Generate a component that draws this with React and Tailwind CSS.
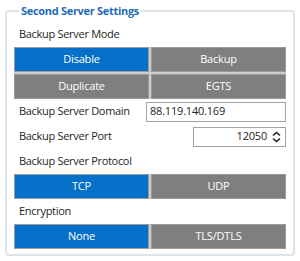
const font = { fontFamily: '"Open Sans", "Noto Sans", sans-serif' };

const Seg = ({ label, active }) => (
  <div
    className={`h-[25px] flex items-center justify-center border border-[#9a9a9a] text-[11px] tracking-[-0.2px] text-white ${
      active ? "bg-[#0770c8]" : "bg-[#7f7f7f]"
    }`}
  >
    {label}
  </div>
);

const Label = ({ children }) => (
  <div className="h-[25px] flex items-center pl-[5px] text-[11px] tracking-[-0.3px] text-[#1e1e1e]">{children}</div>
);

const Spinner = () => (
  <svg width="9" height="12" viewBox="0 0 9 12" className="ml-[5px]">
    <path d="M1 4.5 L4.5 1.5 L8 4.5" fill="none" stroke="#222" strokeWidth="1.6" />
    <path d="M1 7.5 L4.5 10.5 L8 7.5" fill="none" stroke="#222" strokeWidth="1.6" />
  </svg>
);

export default function App() {
  return (
    <div className="w-[300px] h-[261px] bg-white" style={font}>
      <fieldset className="ml-[5px] mt-[4px] w-[290px] h-[252px] border-2 border-[#dbe4eb] rounded-[4px] px-[7px] pb-[5px]">
        <legend className="ml-[5px] px-[2px] text-[11px] tracking-[-0.3px] font-bold leading-[14px] text-[#1f6db5]">
          Second Server Settings
        </legend>

        <div className="mt-[4px]">
          <Label>Backup Server Mode</Label>
        </div>
        <div className="grid grid-cols-2 gap-[2px] bg-[#cdcdcd]">
          <Seg label="Disable" active />
          <Seg label="Backup" />
          <Seg label="Duplicate" />
          <Seg label="EGTS" />
        </div>

        <div className="h-[25px] flex items-center">
          <div className="flex-1 pl-[5px] text-[11px] tracking-[-0.3px] text-[#1e1e1e]">Backup Server Domain</div>
          <div className="w-[140px] h-[20px] border border-[#a3a3a3] flex items-center px-[3px] text-[11px] tracking-[-0.2px] text-[#1e1e1e]">
            88.119.140.169
          </div>
        </div>

        <div className="h-[25px] flex items-center">
          <div className="flex-1 pl-[5px] text-[11px] tracking-[-0.3px] text-[#1e1e1e]">Backup Server Port</div>
          <div className="w-[93px] h-[20px] border border-[#a3a3a3] flex items-center justify-end pr-[4px] text-[11px] tracking-[-0.2px] text-[#1e1e1e]">
            12050
            <Spinner />
          </div>
        </div>

        <Label>Backup Server Protocol</Label>
        <div className="grid grid-cols-2 gap-[2px] bg-[#cdcdcd]">
          <Seg label="TCP" active />
          <Seg label="UDP" />
        </div>

        <Label>Encryption</Label>
        <div className="grid grid-cols-2 gap-[2px] bg-[#cdcdcd]">
          <Seg label="None" active />
          <Seg label="TLS/DTLS" />
        </div>
      </fieldset>
    </div>
  );
}
